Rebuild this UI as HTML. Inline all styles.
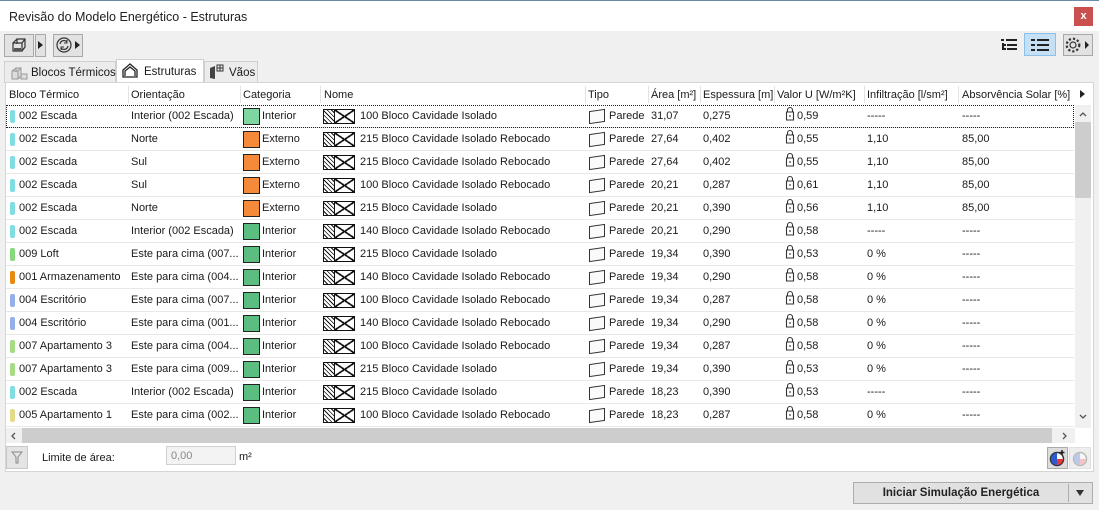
<!DOCTYPE html>
<html><head><meta charset="utf-8"><style>
*{margin:0;padding:0;box-sizing:border-box}
body{width:1099px;height:510px;background:#f0f0f0;font-family:"Liberation Sans",sans-serif;font-size:11px;color:#1a1a1a;position:relative;overflow:hidden;white-space:nowrap}
.abs{position:absolute}
.title{left:0;top:0;width:1099px;height:31px;background:#fff;border-top:1px solid #6a8aa8}
.title span{position:absolute;left:9px;top:9px;font-size:12.5px;color:#222}
.close{right:6px;top:7px;width:19px;height:19px;background:#c9504f;color:#fff;font-size:11px;text-align:center;line-height:18px;font-weight:bold}
.btn{border:1px solid #a8a8a8;background:#e2e2e2}
.tab{top:61px;height:22px;border:1px solid #d0d0d0;border-bottom:none;background:#ececec;font-size:11.5px}
.panel{left:5px;top:82px;width:1089px;height:390px;background:#fff;border:1px solid #d6d6d6}
.hdr{left:6px;top:84px;width:1068px;height:21px;background:#fff}
.hdr span{position:absolute;top:5px}
.sep{position:absolute;top:2px;width:1px;height:17px;background:#e3e3e3}
.row{position:absolute;left:6px;width:1068px;height:23px;border-bottom:1px solid #e8e8e8}
.row span{position:absolute;top:5px}
.bar{position:absolute;left:4px;top:5px;width:5px;height:13px;border-radius:2px}
.sw{position:absolute;left:237px;top:3px;width:17px;height:17px;border:1px solid #222}
.hat{position:absolute;left:317px;top:4px;width:32px;height:15px;border:1px solid #111;background:repeating-linear-gradient(45deg,#fff 0 2px,#111 2px 3px)}
.hat i{position:absolute;left:10px;top:-1px;width:21px;height:15px;border:1px solid #111;background:#fff;
background-image:linear-gradient(34deg,transparent 46%,#111 46% 54%,transparent 54%),linear-gradient(-34deg,transparent 46%,#111 46% 54%,transparent 54%)}
.wall{position:absolute;left:583px;top:5px;width:16px;height:13px;border:1px solid #333;transform:skewY(-8deg);background:#fafafa}
.c1{left:13px}.c2{left:125px}.c3{left:256px}.c4{left:354px}.c5{left:603px}.c6{left:645px}.c7{left:697px}.c8{left:791px}.c9{left:861px}.c10{left:956px}
</style></head><body>
<div class="abs title"><span>Revisão do Modelo Energético - Estruturas</span></div>
<div class="abs close">x</div>

<div class="abs btn" style="left:4px;top:34px;width:30px;height:23px"></div>
<svg class="abs" style="left:10px;top:37px" width="18" height="17" viewBox="0 0 18 17"><path d="M3 6h9v8H3zM3 6l4-4h8v8l-3 4M12 6l3-4M7 2v5" fill="none" stroke="#333" stroke-width="1.2"/><path d="M4 11h7v3H4z" fill="#555"/></svg>
<div class="abs btn" style="left:35px;top:34px;width:11px;height:23px"></div>
<div class="abs" style="left:38px;top:41px;border-left:5px solid #222;border-top:4px solid transparent;border-bottom:4px solid transparent"></div>
<div class="abs btn" style="left:53px;top:34px;width:30px;height:23px"></div>
<svg class="abs" style="left:55px;top:36px" width="18" height="18" viewBox="0 0 18 18"><circle cx="9" cy="9" r="7" fill="none" stroke="#333" stroke-width="1.2"/><path d="M5 8a4 4 0 0 1 7-2M13 10a4 4 0 0 1-7 2" fill="none" stroke="#333" stroke-width="1.2"/><path d="M12 4v3h-3M6 14v-3h3" fill="none" stroke="#333"/></svg>
<div class="abs" style="left:75px;top:41px;border-left:5px solid #222;border-top:4px solid transparent;border-bottom:4px solid transparent"></div>

<svg class="abs" style="left:1001px;top:39px" width="17" height="13" viewBox="0 0 17 13"><path d="M0 1h3M5 1h11M2 4v7M2 6h3M6 6h10M2 10h3M6 10h10" stroke="#222" stroke-width="2"/></svg>
<div class="abs" style="left:1024px;top:33px;width:32px;height:23px;background:#c5dff5;border:1px solid #8ac0ea"></div>
<svg class="abs" style="left:1031px;top:39px" width="18" height="12" viewBox="0 0 18 12"><path d="M0 1h4M6 1h12M0 6h4M6 6h12M0 11h4M6 11h12" stroke="#222" stroke-width="2"/></svg>
<div class="abs btn" style="left:1063px;top:34px;width:30px;height:22px"></div>
<svg class="abs" style="left:1064px;top:36px" width="18" height="18" viewBox="0 0 18 18"><circle cx="9" cy="9" r="3" fill="none" stroke="#333" stroke-width="1.2"/><circle cx="9" cy="9" r="6.3" fill="none" stroke="#333" stroke-width="2.2" stroke-dasharray="2.2 2"/></svg>
<div class="abs" style="left:1085px;top:41px;border-left:4px solid #222;border-top:4px solid transparent;border-bottom:4px solid transparent"></div>

<div class="abs tab" style="left:4px;width:112px"><svg style="position:absolute;left:6px;top:3px" width="17" height="15" viewBox="0 0 17 15"><path d="M1 6l4-3h5v8l-3 3H1zM5 3v4M1 6h6v8M7 6l3-3" fill="#ddd" stroke="#999"/><path d="M10 9h6v5h-6z" fill="#ddd" stroke="#999"/></svg><span style="position:absolute;left:26px;top:5px">Blocos Térmicos</span></div>
<div class="abs tab" style="left:116px;top:59px;width:88px;height:24px;background:#fff"><svg style="position:absolute;left:5px;top:3px" width="16" height="15" viewBox="0 0 16 15"><path d="M1 14V7l7-6 7 6v7zM3 13V8l5-4 5 4v5" fill="none" stroke="#222" stroke-width="1.3"/></svg><span style="position:absolute;left:27px;top:6px">Estruturas</span></div>
<div class="abs tab" style="left:204px;width:54px"><svg style="position:absolute;left:4px;top:2px" width="16" height="16" viewBox="0 0 16 16"><path d="M1 4l5-2v13l-5-1z" fill="#444"/><path d="M8 1h6v6H8z" fill="none" stroke="#333"/><path d="M11 1v6M8 4h6" stroke="#333"/></svg><span style="position:absolute;left:24px;top:5px">Vãos</span></div>

<div class="abs panel"></div>
<div class="abs hdr">
<span style="left:3px">Bloco Térmico</span><i class="sep" style="left:122px"></i>
<span style="left:125px">Orientação</span><i class="sep" style="left:234px"></i>
<span style="left:237px">Categoria</span><i class="sep" style="left:314px"></i>
<span style="left:318px">Nome</span><i class="sep" style="left:579px"></i>
<span style="left:582px">Tipo</span><i class="sep" style="left:642px"></i>
<span style="left:645px">Área [m²]</span><i class="sep" style="left:694px"></i>
<span style="left:697px">Espessura [m]</span><i class="sep" style="left:768px"></i>
<span style="left:771px">Valor U [W/m²K]</span><i class="sep" style="left:858px"></i>
<span style="left:861px">Infiltração [l/sm²]</span><i class="sep" style="left:952px"></i>
<span style="left:956px">Absorvência Solar [%]</span>
</div>
<div class="abs" style="left:1080px;top:90px;border-left:5px solid #222;border-top:4px solid transparent;border-bottom:4px solid transparent"></div>

<div class="row" style="top:105px;outline:1px dotted #222;outline-offset:-1px"><i class="bar" style="background:#80dde4"></i><span class="c1">002 Escada</span><span class="c2">Interior (002 Escada)</span><i class="sw" style="background:#7ed6a0"></i><span class="c3">Interior</span><i class="hat"><i></i></i><span class="c4">100 Bloco Cavidade Isolado</span><i class="wall"></i><span class="c5">Parede</span><span class="c6">31,07</span><span class="c7">0,275</span><span class="c8">0,59</span><span class="c9">-----</span><span class="c10">-----</span></div>
<div class="row" style="top:128px"><i class="bar" style="background:#80dde4"></i><span class="c1">002 Escada</span><span class="c2">Norte</span><i class="sw" style="background:#f58a3a"></i><span class="c3">Externo</span><i class="hat"><i></i></i><span class="c4">215 Bloco Cavidade Isolado Rebocado</span><i class="wall"></i><span class="c5">Parede</span><span class="c6">27,64</span><span class="c7">0,402</span><span class="c8">0,55</span><span class="c9">1,10</span><span class="c10">85,00</span></div>
<div class="row" style="top:151px"><i class="bar" style="background:#80dde4"></i><span class="c1">002 Escada</span><span class="c2">Sul</span><i class="sw" style="background:#f58a3a"></i><span class="c3">Externo</span><i class="hat"><i></i></i><span class="c4">215 Bloco Cavidade Isolado Rebocado</span><i class="wall"></i><span class="c5">Parede</span><span class="c6">27,64</span><span class="c7">0,402</span><span class="c8">0,55</span><span class="c9">1,10</span><span class="c10">85,00</span></div>
<div class="row" style="top:174px"><i class="bar" style="background:#80dde4"></i><span class="c1">002 Escada</span><span class="c2">Sul</span><i class="sw" style="background:#f58a3a"></i><span class="c3">Externo</span><i class="hat"><i></i></i><span class="c4">100 Bloco Cavidade Isolado Rebocado</span><i class="wall"></i><span class="c5">Parede</span><span class="c6">20,21</span><span class="c7">0,287</span><span class="c8">0,61</span><span class="c9">1,10</span><span class="c10">85,00</span></div>
<div class="row" style="top:197px"><i class="bar" style="background:#80dde4"></i><span class="c1">002 Escada</span><span class="c2">Norte</span><i class="sw" style="background:#f58a3a"></i><span class="c3">Externo</span><i class="hat"><i></i></i><span class="c4">215 Bloco Cavidade Isolado</span><i class="wall"></i><span class="c5">Parede</span><span class="c6">20,21</span><span class="c7">0,390</span><span class="c8">0,56</span><span class="c9">1,10</span><span class="c10">85,00</span></div>
<div class="row" style="top:220px"><i class="bar" style="background:#80dde4"></i><span class="c1">002 Escada</span><span class="c2">Interior (002 Escada)</span><i class="sw" style="background:#5bbd80"></i><span class="c3">Interior</span><i class="hat"><i></i></i><span class="c4">140 Bloco Cavidade Isolado Rebocado</span><i class="wall"></i><span class="c5">Parede</span><span class="c6">20,21</span><span class="c7">0,290</span><span class="c8">0,58</span><span class="c9">-----</span><span class="c10">-----</span></div>
<div class="row" style="top:243px"><i class="bar" style="background:#86d97a"></i><span class="c1">009 Loft</span><span class="c2">Este para cima (007...</span><i class="sw" style="background:#5bbd80"></i><span class="c3">Interior</span><i class="hat"><i></i></i><span class="c4">215 Bloco Cavidade Isolado</span><i class="wall"></i><span class="c5">Parede</span><span class="c6">19,34</span><span class="c7">0,390</span><span class="c8">0,53</span><span class="c9">0 %</span><span class="c10">-----</span></div>
<div class="row" style="top:266px"><i class="bar" style="background:#e88a12"></i><span class="c1">001 Armazenamento</span><span class="c2">Este para cima (004...</span><i class="sw" style="background:#5bbd80"></i><span class="c3">Interior</span><i class="hat"><i></i></i><span class="c4">140 Bloco Cavidade Isolado Rebocado</span><i class="wall"></i><span class="c5">Parede</span><span class="c6">19,34</span><span class="c7">0,290</span><span class="c8">0,58</span><span class="c9">0 %</span><span class="c10">-----</span></div>
<div class="row" style="top:289px"><i class="bar" style="background:#93b0e8"></i><span class="c1">004 Escritório</span><span class="c2">Este para cima (007...</span><i class="sw" style="background:#5bbd80"></i><span class="c3">Interior</span><i class="hat"><i></i></i><span class="c4">100 Bloco Cavidade Isolado Rebocado</span><i class="wall"></i><span class="c5">Parede</span><span class="c6">19,34</span><span class="c7">0,287</span><span class="c8">0,58</span><span class="c9">0 %</span><span class="c10">-----</span></div>
<div class="row" style="top:312px"><i class="bar" style="background:#93b0e8"></i><span class="c1">004 Escritório</span><span class="c2">Este para cima (001...</span><i class="sw" style="background:#5bbd80"></i><span class="c3">Interior</span><i class="hat"><i></i></i><span class="c4">140 Bloco Cavidade Isolado Rebocado</span><i class="wall"></i><span class="c5">Parede</span><span class="c6">19,34</span><span class="c7">0,290</span><span class="c8">0,58</span><span class="c9">0 %</span><span class="c10">-----</span></div>
<div class="row" style="top:335px"><i class="bar" style="background:#a6dc86"></i><span class="c1">007 Apartamento 3</span><span class="c2">Este para cima (004...</span><i class="sw" style="background:#5bbd80"></i><span class="c3">Interior</span><i class="hat"><i></i></i><span class="c4">100 Bloco Cavidade Isolado Rebocado</span><i class="wall"></i><span class="c5">Parede</span><span class="c6">19,34</span><span class="c7">0,287</span><span class="c8">0,58</span><span class="c9">0 %</span><span class="c10">-----</span></div>
<div class="row" style="top:358px"><i class="bar" style="background:#a6dc86"></i><span class="c1">007 Apartamento 3</span><span class="c2">Este para cima (009...</span><i class="sw" style="background:#5bbd80"></i><span class="c3">Interior</span><i class="hat"><i></i></i><span class="c4">215 Bloco Cavidade Isolado</span><i class="wall"></i><span class="c5">Parede</span><span class="c6">19,34</span><span class="c7">0,390</span><span class="c8">0,53</span><span class="c9">0 %</span><span class="c10">-----</span></div>
<div class="row" style="top:381px"><i class="bar" style="background:#80dde4"></i><span class="c1">002 Escada</span><span class="c2">Interior (002 Escada)</span><i class="sw" style="background:#5bbd80"></i><span class="c3">Interior</span><i class="hat"><i></i></i><span class="c4">215 Bloco Cavidade Isolado</span><i class="wall"></i><span class="c5">Parede</span><span class="c6">18,23</span><span class="c7">0,390</span><span class="c8">0,53</span><span class="c9">-----</span><span class="c10">-----</span></div>
<div class="row" style="top:404px"><i class="bar" style="background:#e3da8a"></i><span class="c1">005 Apartamento 1</span><span class="c2">Este para cima (002...</span><i class="sw" style="background:#5bbd80"></i><span class="c3">Interior</span><i class="hat"><i></i></i><span class="c4">100 Bloco Cavidade Isolado Rebocado</span><i class="wall"></i><span class="c5">Parede</span><span class="c6">18,23</span><span class="c7">0,287</span><span class="c8">0,58</span><span class="c9">0 %</span><span class="c10">-----</span></div>

<svg class="abs" style="left:785px;top:105px" width="10" height="322" viewBox="0 0 10 322">
<defs><path id="lk" d="M2.5 7V5a2.5 2.5 0 0 1 5 0v2M1.5 7h7v8h-7zM5 10v2" fill="none" stroke="#333" stroke-width="1.1"/></defs>
<use href="#lk"/><use href="#lk" y="23"/><use href="#lk" y="46"/><use href="#lk" y="69"/><use href="#lk" y="92"/><use href="#lk" y="115"/><use href="#lk" y="138"/><use href="#lk" y="161"/><use href="#lk" y="184"/><use href="#lk" y="207"/><use href="#lk" y="230"/><use href="#lk" y="253"/><use href="#lk" y="276"/><use href="#lk" y="299"/>
</svg>

<div class="abs" style="left:1075px;top:105px;width:16px;height:323px;background:#f0f0f0"></div>
<div class="abs" style="left:1075px;top:122px;width:16px;height:76px;background:#cdcdcd"></div>
<svg class="abs" style="left:1079px;top:111px" width="8" height="6"><path d="M1 5l3-3 3 3" fill="none" stroke="#555" stroke-width="1.3"/></svg>
<svg class="abs" style="left:1079px;top:414px" width="8" height="6"><path d="M1 1l3 3 3-3" fill="none" stroke="#555" stroke-width="1.3"/></svg>

<div class="abs" style="left:6px;top:428px;width:1069px;height:15px;background:#f0f0f0"></div>
<div class="abs" style="left:22px;top:428px;width:1030px;height:15px;background:#cdcdcd"></div>
<svg class="abs" style="left:10px;top:432px" width="6" height="8"><path d="M5 1L2 4l3 3" fill="none" stroke="#555" stroke-width="1.3"/></svg>
<svg class="abs" style="left:1062px;top:432px" width="6" height="8"><path d="M1 1l3 3-3 3" fill="none" stroke="#555" stroke-width="1.3"/></svg>

<div class="abs" style="left:6px;top:446px;width:22px;height:23px;background:#e4e4e4;border:1px solid #c8c8c8"></div>
<svg class="abs" style="left:11px;top:451px" width="12" height="13" viewBox="0 0 12 13"><path d="M1 1h10L7 6v6H5V6z" fill="none" stroke="#888"/></svg>
<div class="abs" style="left:42px;top:452px;font-size:11px">Limite de área:</div>
<div class="abs" style="left:166px;top:446px;width:70px;height:19px;border:1px solid #d0d0d0;background:#f3f3f3;color:#888;font-size:11px;padding:3px 4px">0,00</div>
<div class="abs" style="left:239px;top:451px;font-size:11px">m²</div>
<div class="abs" style="left:1047px;top:447px;width:21px;height:22px;border:1px solid #aaa;background:#ddd"></div>
<svg class="abs" style="left:1049px;top:449px" width="17" height="18" viewBox="0 0 17 18"><circle cx="8" cy="10" r="6.5" fill="#fff" stroke="#333" stroke-width="1.5"/><path d="M8 4a6 6 0 0 0 0 12z" fill="#2a5bd0"/><path d="M8 10h6a6 6 0 0 1-6 6z" fill="#e33"/><path d="M13 1v5M10.5 3.5h5" stroke="#222" stroke-width="1.5"/></svg>
<div class="abs" style="left:1069px;top:447px;width:22px;height:22px;border:1px solid #ccc;background:#e4e4e4;opacity:.6"></div>
<svg class="abs" style="left:1072px;top:449px;opacity:.5" width="17" height="18" viewBox="0 0 17 18"><circle cx="8" cy="10" r="6.5" fill="#fff" stroke="#888" stroke-width="1.5"/><path d="M8 4a6 6 0 0 0 0 12z" fill="#8aa8e8"/><path d="M8 10h6a6 6 0 0 1-6 6z" fill="#f99"/></svg>

<div class="abs" style="left:853px;top:482px;width:240px;height:22px;background:#e1e1e1;border:1px solid #adadad"></div>
<div class="abs" style="left:853px;top:487px;width:216px;text-align:center;font-size:11.5px;font-weight:bold;color:#222">Iniciar Simulação Energética</div>
<div class="abs" style="left:1068px;top:484px;width:1px;height:18px;background:#adadad"></div>
<div class="abs" style="left:1076px;top:490px;border-top:6px solid #333;border-left:4px solid transparent;border-right:4px solid transparent"></div>
</body></html>
